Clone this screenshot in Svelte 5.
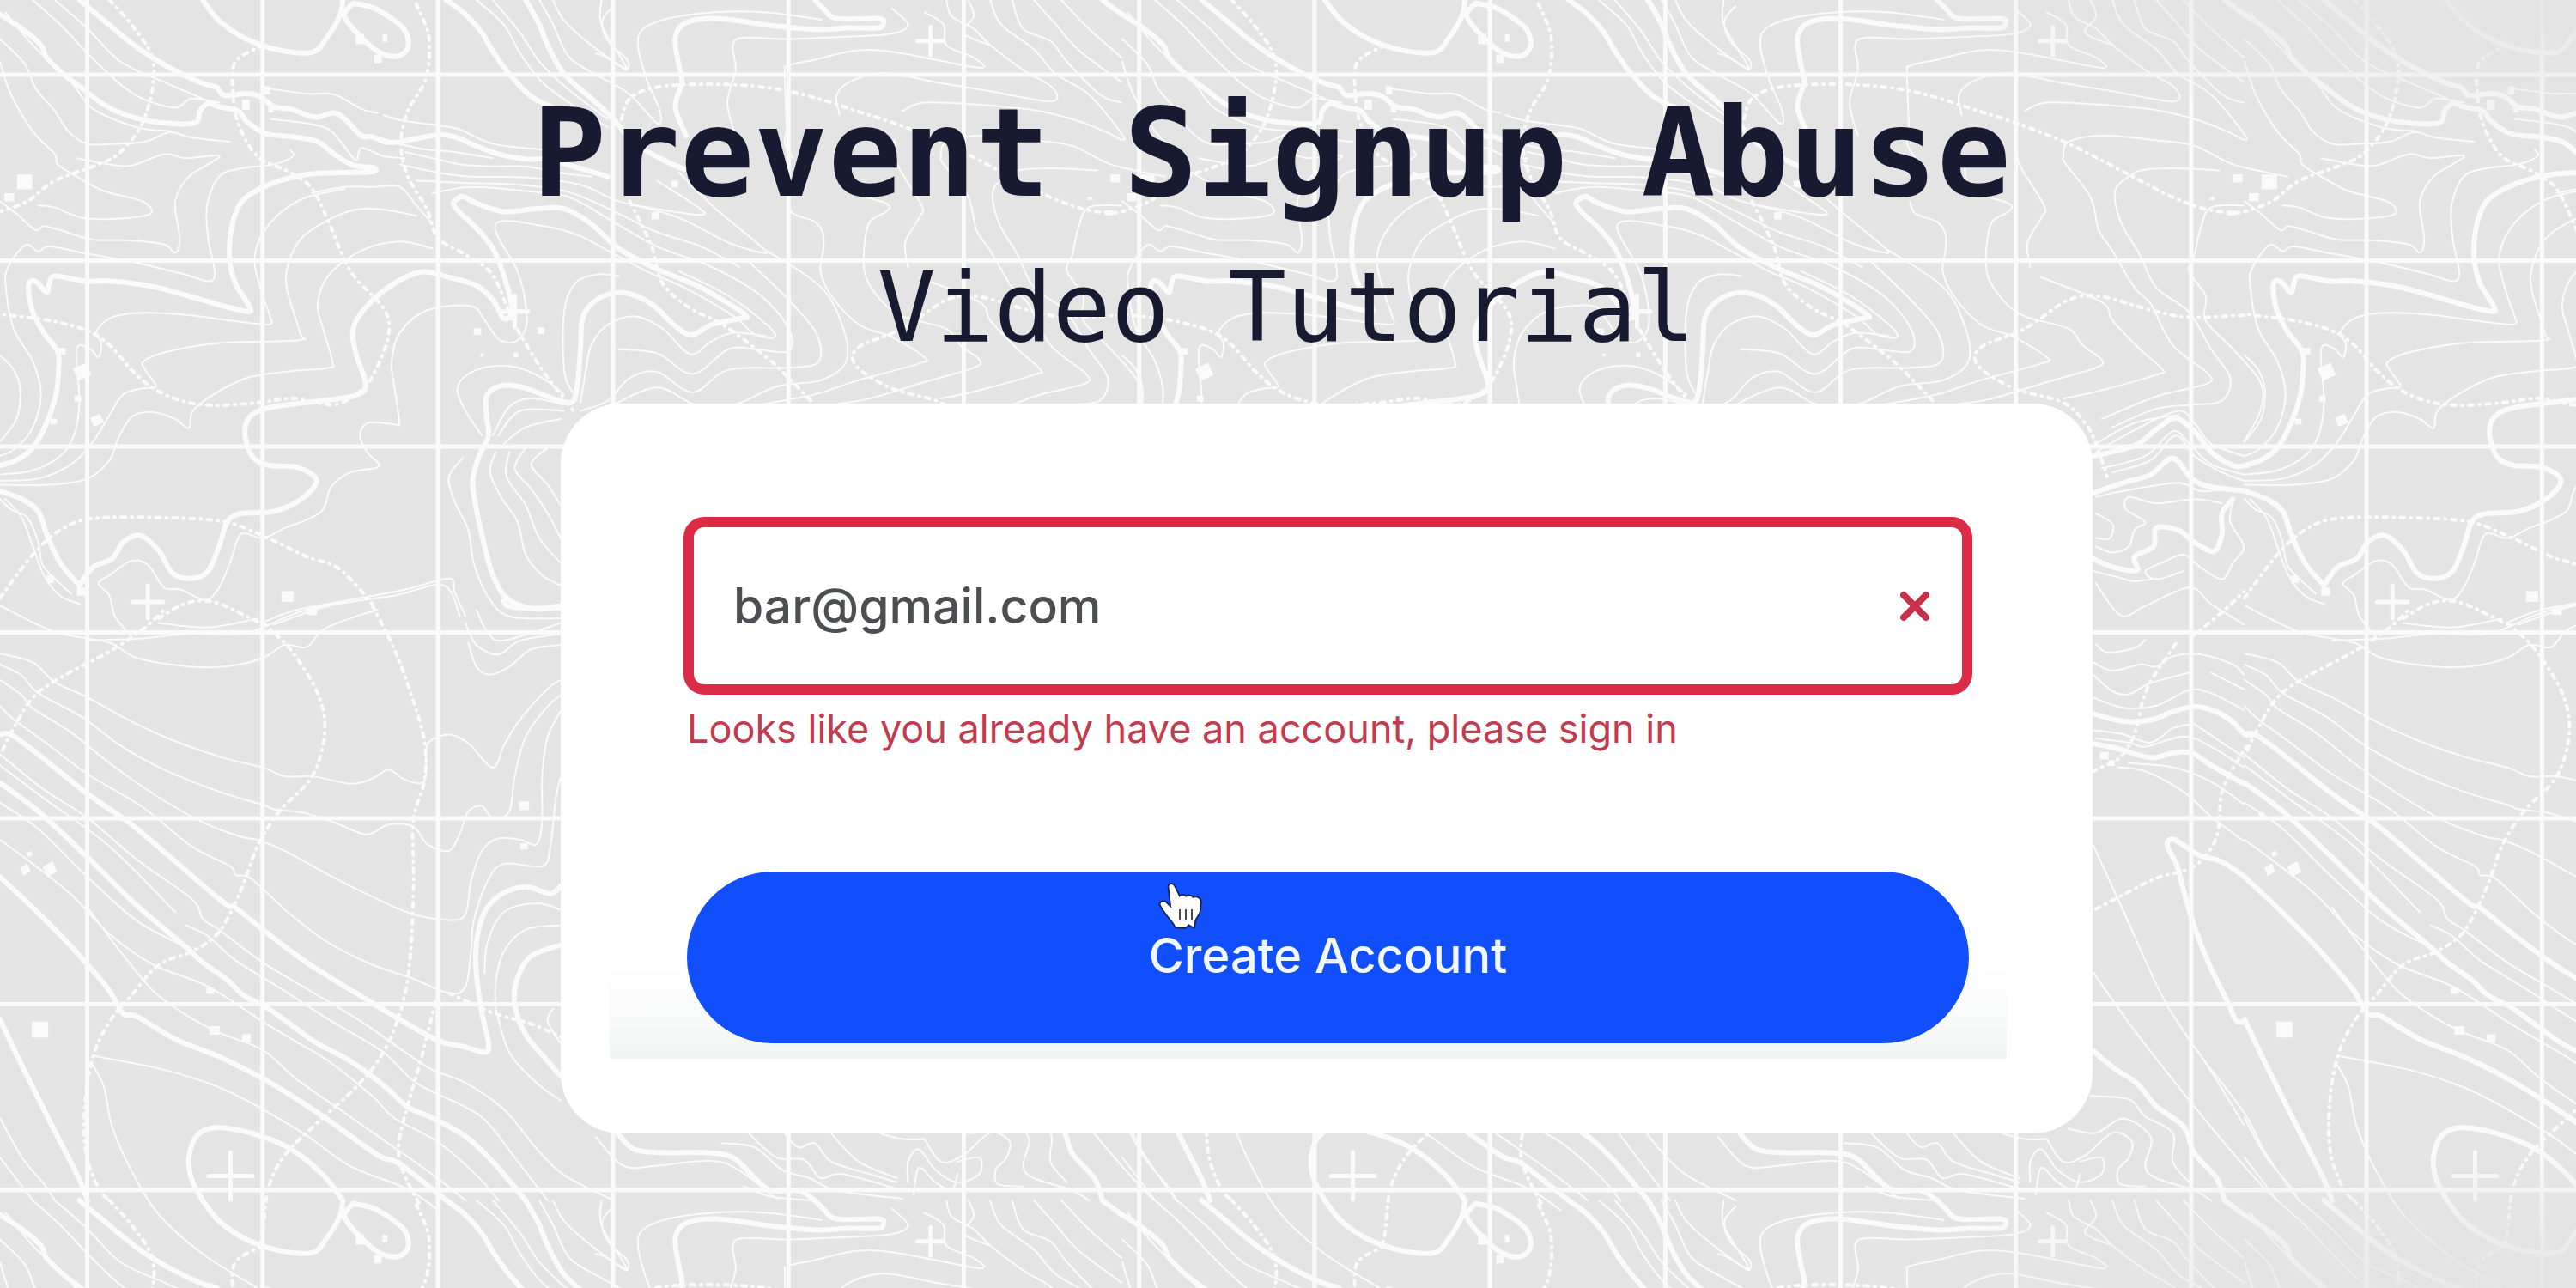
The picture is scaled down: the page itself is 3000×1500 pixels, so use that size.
<script>
  let email = $state('bar@gmail.com');

  // The contour map is a repeating tile, drawn in four sheets with their own scale.
  const TILE_W = 1307;
  const TILE_H = 1398;
  const copies = [0, 1, 2].flatMap((c) => [0, 1].map((r) => ({ x: c * TILE_W, y: r * TILE_H })));

  const sheets = [
    {
      ox: 0, oy: 0, sx: 1.568, sy: 2.09,
      bold: [
        '0,35 40,70 75,110 85,140 120,185 150,215 190,255 230,280 290,298 355,299 365,270 380,252 400,260 435,270 450,295 485,325 530,332 580,345 610,375 645,402 682,408 680,418 620,420 560,425 500,445 450,480 430,520 420,580 420,640 430,690 455,745 452,758 400,742 330,715 270,695 200,684 155,684 100,672 90,690 85,712 70,690 58,683 52,700 60,760 80,810 105,855 107,900 102,960 85,1030 60,1090 30,1120 0,1133',
        '145,0 190,50 250,115 310,165 370,203 395,212 410,232 450,228 475,235 500,260 530,265 560,280 580,285 610,275 630,290 660,330 680,333 710,347 750,340 800,328 835,335 860,350 910,375 960,387 1000,388 1060,410 1110,430',
        '370,0 400,50 450,95 510,122 570,127 595,95 620,40 626,0',
        '645,8 630,30 632,48 655,85 690,125 725,137 745,115 740,75 715,45 680,18 645,8',
        '815,0 850,35 880,80 900,125 930,180 970,235 1010,262',
        '960,0 985,60 1000,110 1030,180 1080,240 1120,290 1160,350 1220,395 1250,412',
        '830,490 845,478 870,495 920,515 980,508 1030,508 1080,545 1130,605 1200,655 1280,700 1360,765 1350,775 1300,790 1262,815 1230,790 1190,740 1140,713 1095,725 1065,770 1060,850 1055,930 1045,978 1010,970 960,945 920,938 890,960 888,1010 892,1060 875,1110 863,1170 870,1240 885,1330 900,1400 925,1455 970,1480 1024,1475',
        '840,480 828,495 840,518 870,555 900,605 920,670 935,755 920,775 900,730 870,695 820,675 770,662 720,690 670,745 645,800 650,860 668,935 650,962 590,975 500,990 460,1010 447,1050 460,1110 490,1132 545,1138 578,1170 550,1215 500,1245 440,1250 415,1270 400,1330 380,1390 350,1408 315,1395 290,1340 255,1303 225,1320 205,1360 170,1380 145,1425',
        '0,1195 40,1215 70,1245 85,1300 110,1370 145,1425'
      ],
      fine: [
        '0,95 45,155 65,215 100,270 125,320 160,350 210,350 265,345 310,322 350,335 420,345',
        '10,30 60,110 130,200 170,265 250,310 310,318',
        '60,0 110,60 160,130 215,200 260,240 320,262 350,240 400,250',
        '100,0 160,70 220,150 300,200 370,240',
        '0,150 20,230 60,320 100,375 105,400 140,430 190,465 260,490 275,520 220,532 150,530 100,505 70,500',
        '140,385 200,400 240,403 300,375 340,385 400,378 380,400 345,430 320,490 328,580 320,615 300,595 240,585 170,583 110,560 80,550 65,560 30,520 0,490',
        '530,365 535,380 500,400 440,410 400,430 378,500 380,580 390,680 330,665 250,640 150,615 90,600 70,612 50,595 35,610 15,650 10,690 25,800 60,880 75,960 60,1040 30,1090 0,1110',
        '570,470 630,455 680,455 730,455 760,500 790,545',
        '0,1155 60,1145 110,1110 135,1060 145,980 140,850 165,850 180,870 185,835 175,810 200,775 250,762 330,765 420,780 490,790 493,770 480,720 465,640 475,580 510,520 560,480 630,460',
        '0,1170 70,1165 130,1130 170,1075 200,1010 225,960 260,945 285,940 265,900 262,880 300,858 400,835 545,828 548,810 525,710 525,650 550,580 600,535 650,510 700,510 760,525',
        '0,1180 90,1180 160,1165 200,1120 215,1070 240,1015 280,1003 320,1020 345,1042 352,1000 390,960 450,920 520,905 600,895 607,880 590,800 580,740 600,670 660,610 730,588 790,605',
        '0,865 25,900 37,950 30,1020 0,1075',
        '730,1035 727,1000 720,940 715,880 730,810 780,755 860,745 885,780 910,825 940,832 960,800 960,740 945,660 905,545 1000,552 1060,575 1110,610 1180,660 1250,700 1340,770 1380,815 1415,820 1400,790 1330,720 1240,660',
        '730,1035 700,1030 670,1030 657,1060 670,1100 692,1135 640,1150 605,1185 590,1240 560,1265 520,1285 480,1310 440,1300 420,1370 400,1430 375,1460 330,1435 300,1430 270,1375 240,1365 200,1400 180,1420 200,1450 210,1500 240,1550',
        '740,370 790,385 840,400 900,405 960,405 1020,420 1080,430',
        '730,400 800,420 860,430 960,432 1060,450 1130,490 1230,515 1285,522 1270,500 1200,440',
        '760,440 850,445 950,450 1040,468 1130,520 1200,565 1280,600 1350,650',
        '790,470 860,455 960,465 1040,480 1120,540 1200,600 1300,650 1390,720 1440,800 1440,855 1380,850 1330,850 1265,910 1200,860 1130,850',
        '1240,420 1300,500 1390,600 1392,615 1330,590 1240,530 1160,500',
        '680,330 760,360 830,370 900,385',
        '495,290 560,300 600,315 625,350 650,390 660,360 700,380 740,385',
        '490,215 560,228 610,230 660,265 690,275',
        '700,280 740,295 800,305 840,315 900,350 1000,365',
        '870,0 920,60 950,130 990,200 1050,260 1110,310',
        '900,0 950,80 985,150 1040,220 1110,290',
        '985,0 1010,60 1040,140 1100,190 1150,230 1200,300 1205,270 1180,190 1165,110 1175,70 1220,45 1300,30 1400,30 1500,48',
        '1010,0 1030,50 1080,110 1140,165 1145,145 1110,100 1100,50 1120,15',
        '1045,955 1030,900 1030,760 1050,690 1090,668 1130,672',
        '880,1060 850,1000 835,950 850,915 890,893 940,893 990,920 1030,960',
        '900,1060 930,990 970,970 1030,985',
        '910,1060 950,1000 1030,1000',
        '920,1080 960,1040 1024,1020',
        '905,1100 895,1150 915,1210 945,1270 960,1350 990,1400 1024,1425',
        '930,1100 925,1160 960,1230 985,1310 1024,1370',
        '960,1090 940,1140 970,1190 1000,1250 1024,1310',
        '1000,1090 970,1130 1000,1180 1024,1230',
        '845,1115 820,1160 830,1220 855,1290 865,1370 890,1450 930,1500 1024,1505',
        '1060,980 1070,900 1080,840 1110,790 1160,770 1210,800 1260,862 1300,830 1340,810 1400,818',
        '1060,1000 1110,975 1150,920 1200,905 1265,955 1330,900 1440,895 1495,880 1490,810 1440,730 1370,640',
        '1120,985 1200,943 1270,985 1340,985 1420,940 1500,925 1545,880 1540,800 1500,700 1400,610',
        '480,1515 540,1485 640,1460 740,1435 820,1408 830,1440 850,1500',
        '500,1520 600,1475 720,1450 810,1425 840,1500',
        '10,1215 40,1260 60,1330 80,1400 110,1450 145,1470',
        '0,1215 20,1240 50,1260 70,1320 80,1380 130,1445'
      ],
      dash: [
        '200,0 240,60 275,130 280,200 260,300 220,370 180,400 100,440 50,490 0,515',
        '480,110 430,150 425,220 435,300 470,380 530,420 570,460 600,540 640,660 700,750 710,810 690,890 660,950 610,985 540,970 470,980 390,987 330,975 280,945 240,900 200,840 160,805 90,780 0,765',
        '760,10 783,90 778,190 745,270 732,350 745,430 780,510 800,580 850,620 900,670 940,790 990,900 1030,970 1050,1005',
        '1135,290 1150,240 1200,212 1300,205 1400,213 1480,235 1568,272',
        '1150,490 1190,600 1210,690 1260,750 1320,790 1400,870 1440,920 1480,975',
        '0,1455 60,1350 110,1290 170,1262 300,1260 410,1270 490,1310 560,1355 620,1385 680,1470',
        '290,1505 340,1468 390,1465 450,1500 480,1520'
      ],
      marks: '45,443,28,36 17,480,18,20 657,95,15,26 703,93,9,18 690,143,14,20 449,255,14,24 487,220,12,20 495,265,10,18 113,855,14,16 142,970,12,14 98,1026,12,14 92,1410,14,18 525,1452,22,26 570,1487,18,20 872,807,14,16 988,805,12,16 880,864,6,8 942,864,8,12 1197,525,14,18 1232,448,12,16 148,1440,16,20',
      gems: '150,905,34,44 177,1023,26,32',
      plus: '270,1465,28,40 940,758,24,38'
    },
    {
      ox: 0, oy: 700, sx: 1.568, sy: 1.96,
      bold: [
        '0,305 20,305 70,350 160,440 240,510 330,605 410,690 430,700 480,750 560,825 670,910 730,955 800,1003 850,1018 885,1030 892,1010 880,940 870,850 870,780 885,710 915,670 960,652 1005,668 1024,650',
        '0,415 70,480 160,585 250,695 340,790 370,825 415,865 445,900 490,930 540,975 580,1010 640,1050 700,1105 745,1155 790,1180 850,1222 900,1280 960,1368',
        '0,630 60,700 120,775 160,830 200,890 225,942 250,948 320,1000 400,1040 480,1090 540,1135 600,1185 690,1265 730,1285 815,1368',
        '0,955 40,1060 90,1185 145,1320 160,1368',
        '370,1368 350,1320 345,1270 360,1220 395,1202 460,1215 530,1250 590,1310 626,1368',
        '1024,785 970,810 945,860 940,920 960,990 1000,1050 1024,1085',
        '920,0 930,12 980,18 1024,15'
      ],
      fine: [
        '0,120 60,140 100,185 160,220 240,275 320,320 400,355 480,380 520,400 570,400 640,417 680,405 710,385 740,408 775,412 778,350 785,320 820,305 855,325 895,378 910,365 920,330 950,270 1000,200 1024,180',
        '0,145 40,170 70,210 150,265 220,330 300,385 400,435 480,465 500,475 560,485 620,510 670,533 710,510 755,515 780,555 820,570 840,530 855,480 880,468 900,495 930,480 940,400 960,310 1000,240 1024,215',
        '0,180 40,215 60,245 130,300 200,370 280,440 370,505 440,538 470,545 520,570 600,625 680,675 750,713 820,728 850,715 860,640 880,570 910,542 950,545 980,555 990,500 990,400 1000,310 1024,250',
        '0,240 25,270 80,320 160,395 260,470 350,560 420,605 430,625 460,635 530,715 600,780 680,830 750,860 820,895 850,880 860,800 865,730 890,640 920,600 990,605 1005,560 1015,450 1024,400',
        '0,350 80,430 160,495 250,590 350,680 370,725 400,750 480,825 560,885 660,960 740,1030 790,1070 850,1100 920,1160 980,1250 1030,1310 1120,1368',
        '0,375 80,450 200,560 320,710',
        '0,460 70,520 160,630 250,730 340,790',
        '340,740 380,765 430,820 520,890 600,955 700,1030 760,1100 850,1155 890,1190 940,1270 1000,1368',
        '0,545 60,600 130,670 200,760 280,830 380,880 480,960 540,1005 600,1050 680,1130 720,1180 800,1235 870,1310 910,1368',
        '160,700 220,800 280,890 340,945 400,985 480,1025 540,1090 620,1160 700,1230 780,1300 850,1368',
        '170,1038 300,1070 400,1110 480,1160 560,1220 640,1290 740,1340 800,1390',
        '170,1060 190,1110 205,1200 240,1300 290,1400 370,1490 470,1568',
        '0,1180 40,1270 80,1330 100,1368',
        '0,1270 60,1368',
        '905,930 905,870 920,800 960,750 1024,740',
        '885,850 890,780 920,710 980,690 1024,705',
        '905,930 930,1030 980,1100 1024,1140',
        '1010,930 1000,960 1024,1010',
        '0,10 100,70 200,95 250,130 350,150 420,148 480,130 520,100 560,105 590,65 650,35 690,20',
        '290,50 380,60 470,40',
        '160,90 260,85 340,75 440,75 480,60 560,20 700,-10',
        '855,95 870,150 895,168 930,150 970,110 1024,100',
        '850,50 870,100 910,122 950,90 1024,75',
        '870,20 890,70 920,90 1024,50'
      ],
      dash: [
        '5,340 25,290 60,220 110,175 200,115 260,65 300,20',
        '480,50 530,110 580,210 593,300 570,400 510,480 470,560 440,660 400,755 350,800 290,830 240,900 200,960 170,1040 155,1150 157,1260 180,1340 200,1368',
        '680,10 720,110 750,210 775,320 775,410 755,500 755,640 750,800 735,920 700,1030 650,1110 580,1190 520,1265 490,1340 480,1440 475,1470',
        '795,915 770,1040 745,1150 728,1240 735,1300 765,1375',
        '820,895 900,940 970,965 1024,995'
      ],
      marks: '73,978,30,36 384,890,14,14 392,980,18,20 450,998,16,18 957,467,18,20 957,560,14,14',
      gems: '91,612,26,36 46,613,20,28 54,577,12,14',
      plus: '421,1312,40,54'
    },
    {
      ox: 694, oy: 0, sx: 1.568, sy: 2.09,
      bold: [
        '400,0 415,20 440,45 515,45 525,56 515,68 460,68 400,72 320,62 220,45 165,55 145,90 150,150 157,200 145,260 165,330',
        '925,0 960,35',
        '685,1110 760,1085 800,1045 835,1018 870,1050 900,1100 940,1133 965,1133',
        '685,1200 740,1175 790,1155 830,1115 865,1165 900,1185 965,1195',
        '685,1360 720,1380 765,1388 760,1355 795,1330 800,1285 840,1290 870,1320 905,1342 920,1300 920,1250 940,1215'
      ],
      fine: [
        '10,0 10,60 50,150 55,170 20,140 0,130',
        '360,385 345,350 348,310 345,180 350,160 400,145 480,122 560,130 700,165 690,140 640,110 635,60 600,30',
        '255,330 240,250 255,170 250,110 270,92 350,95 450,90 540,82 570,60 540,20',
        '445,280 440,230 470,195 530,178 620,200 720,222 830,247 835,215 780,170 720,110 690,70 650,40 640,0',
        '560,270 600,250 700,255 800,268 870,290 930,320 960,340 960,325 900,230 840,180 800,120 740,60 720,0',
        '350,490 360,520 400,540 415,570 415,610 410,660 430,720 480,790 540,820 600,870 590,885 480,925 400,960 300,985',
        '450,385 460,460 530,495 530,515 500,540 490,600 492,670 520,730 560,770 640,800 665,840 700,875 690,895 600,930 500,970 440,983',
        '545,340 550,400 595,500 590,530 565,590 570,650',
        '590,675 700,735 720,780 770,850 812,900 800,912 700,950 630,970',
        '1040,430 940,400 870,355 790,340 700,330 640,345 630,380 635,400 680,480 695,560 720,610 760,700 790,740 830,840 895,910 890,935 800,965 700,1020',
        '915,415 850,410 780,413 750,430 725,465 735,540 770,620 800,700 860,760 900,850 935,920 920,975 870,985 800,995 720,1040',
        '960,500 900,505 880,560 870,620 860,660 890,720 890,780 940,850 990,930 990,1000 960,1075',
        '760,0 780,70 830,100 860,150 920,230 960,250',
        '800,0 840,60 880,120 960,200',
        '850,0 900,70 960,140',
        '680,0 690,40 670,80 720,110',
        '690,1100 770,1040 840,1000 870,1030 900,1080 960,1110',
        '690,1080 760,1030 840,1010',
        '700,1140 780,1110 830,1050 860,1080 900,1130 960,1155',
        '720,1150 790,1120 835,1060 870,1110 920,1150 960,1170',
        '690,1210 740,1195 840,1175 880,1195 930,1190',
        '920,1225 870,1215 800,1225 750,1210 745,1240 780,1270 760,1290 750,1330 720,1345 690,1330',
        '690,1250 720,1275 715,1310 690,1310',
        '940,1220 935,1270 960,1330 940,1370 920,1410 880,1380 850,1350 810,1370 780,1390 800,1410 850,1390',
        '685,1390 730,1405 760,1415 800,1408',
        '690,1420 735,1498 780,1475 860,1430 900,1470 960,1520'
      ],
      dash: [
        '480,272 545,300 640,350 750,425 830,480 900,512 960,518',
        '960,767 860,772 790,755 700,722 640,730 560,800 480,845 475,890 540,945 630,980 670,1030 690,1080 710,1160',
        '865,1550 920,1490 960,1440'
      ],
      marks: '948,434,18,20 937,518,16,12 902,483,8,8',
      gems: '',
      plus: '611,100,24,34'
    },
    {
      ox: 694, oy: 750, sx: 1.568, sy: 2.09,
      bold: [
        '685,170 740,188 790,185 830,165 870,152 910,165 940,190 960,218 975,222',
        '685,243 730,255 790,277 830,265 865,265 900,295 960,340',
        '960,565 920,530 880,515 850,490 830,475 820,490 838,540 850,600 870,690 900,790 930,870 945,915 960,920',
        '685,990 720,1030 765,1070 800,1125 850,1175 870,1240 910,1300 925,1355',
        '40,1192 70,1230 120,1238 200,1238 250,1250 290,1300 320,1330 370,1330 400,1355'
      ],
      fine: [
        '685,45 720,65 770,50 800,55 830,30 880,25 940,50 960,75',
        '685,75 720,115 750,122 790,95 865,68',
        '685,130 740,155 800,150 860,112 900,120 960,160',
        '685,210 740,220 790,240 830,205 865,195',
        '690,230 750,240 780,250 850,225 900,250 960,300',
        '750,290 830,300 900,335 960,390',
        '730,300 780,310 850,360 900,420 960,480',
        '690,0 710,20 760,10 780,-10',
        '900,70 960,110',
        '870,195 920,240 960,275',
        '685,490 740,650 780,770 820,880 880,1000 960,1140 1000,1240 1060,1355',
        '685,800 760,940 860,1110 960,1270 1020,1355',
        '870,980 900,1040 960,1170',
        '680,1100 750,1108 780,1150 830,1190 830,1260 860,1310',
        '640,1180 690,1190 740,1155 790,1200 780,1270 800,1300 870,1330 900,1355',
        '600,1205 630,1260 670,1245 720,1190 755,1210 750,1250 730,1280 735,1315 780,1320',
        '570,1310 570,1260 590,1230 620,1280 660,1310 700,1290 700,1250 660,1260',
        '580,1340 590,1275 620,1310 650,1330 660,1290',
        '345,1192 370,1225 400,1215 430,1260 500,1290 550,1310',
        '280,1192 330,1250 380,1255 410,1300 450,1290 560,1330',
        '230,1215 290,1225 340,1280 390,1300 440,1330 560,1350',
        '270,1320 320,1345 400,1355',
        '430,1192 480,1260 550,1300',
        '0,1200 50,1270 110,1270 210,1258 260,1280 330,1350',
        '520,1192 560,1205 600,1205'
      ],
      dash: [
        '835,0 820,30 790,90 775,140 760,220 735,275 700,300 685,310',
        '690,645 740,610 800,570 870,540 910,470 920,360 950,280 965,250'
      ],
      marks: '705,272,16,18 718,290,12,14',
      gems: '993,415,14,12',
      plus: ''
    }
  ];

  const round = (n) => Math.round(n * 10) / 10;

  // Smooth curve through every point of a list.
  function curve(text, s) {
    const p = text.split(' ').map((pair) => {
      const [x, y] = pair.split(',').map(Number);
      return [s.ox + x / s.sx, s.oy + y / s.sy];
    });
    let d = `M${round(p[0][0])} ${round(p[0][1])}`;
    for (let i = 0; i < p.length - 1; i++) {
      const a = p[i - 1] ?? p[i];
      const b = p[i];
      const c = p[i + 1];
      const e = p[i + 2] ?? c;
      d += `C${round(b[0] + (c[0] - a[0]) / 6)} ${round(b[1] + (c[1] - a[1]) / 6)} ${round(c[0] - (e[0] - b[0]) / 6)} ${round(c[1] - (e[1] - b[1]) / 6)} ${round(c[0])} ${round(c[1])}`;
    }
    return d;
  }

  function boxes(text, s) {
    if (!text) return [];
    return text.split(' ').map((item) => {
      const [x, y, w, h] = item.split(',').map(Number);
      return { x: s.ox + x / s.sx, y: s.oy + y / s.sy, w: w / s.sx, h: h / s.sy };
    });
  }

  const lines = (kind) => sheets.map((s) => s[kind].map((t) => curve(t, s)).join('')).join('');
  const shapes = (kind) => sheets.flatMap((s) => boxes(s[kind], s));

  const bold = lines('bold');
  const fine = lines('fine');
  const dash = lines('dash');
  const marks = shapes('marks')
    .map((b) => `M${round(b.x - b.w / 2)} ${round(b.y - b.h / 2)}h${round(b.w)}v${round(b.h)}h${round(-b.w)}z`)
    .join('');
  const gems = shapes('gems')
    .map((b) => `M${round(b.x + b.w / 5)} ${round(b.y - b.h / 2)}L${round(b.x + b.w / 2)} ${round(b.y + b.h / 6)}L${round(b.x - b.w / 5)} ${round(b.y + b.h / 2)}L${round(b.x - b.w / 2)} ${round(b.y - b.h / 6)}z`)
    .join('');
  const plus = shapes('plus')
    .map((b) => `M${round(b.x - b.w)} ${round(b.y)}h${round(b.w * 2)}M${round(b.x)} ${round(b.y - b.h)}v${round(b.h * 2)}`)
    .join('');

  const grid =
    Array.from({ length: 15 }, (_, i) => `M${round(101.5 + i * 204.2)} 0V1500`).join('') +
    Array.from({ length: 7 }, (_, i) => `M0 ${round(87 + i * 216.5)}H3000`).join('');
</script>

<div class="page">
  <svg class="map" viewBox="0 0 3000 1500" preserveAspectRatio="xMidYMid slice" aria-hidden="true">
    <defs>
      <radialGradient id="fade">
        <stop offset="0" stop-color="#e4e4e4" stop-opacity="0.95" />
        <stop offset="0.35" stop-color="#e4e4e4" stop-opacity="0.65" />
        <stop offset="1" stop-color="#e4e4e4" stop-opacity="0" />
      </radialGradient>
      <g id="tile">
        <path class="fine" d={fine} />
        <path class="bold" d={bold} />
        <path class="dash" d={dash} />
        <path class="solid" d={marks} />
        <path class="solid" d={gems} />
        <path class="plus" d={plus} />
      </g>
    </defs>
    {#each copies as c}
      <use href="#tile" x={c.x} y={c.y} />
    {/each}
    <path class="grid" d={grid} />
    <ellipse cx="3000" cy="0" rx="800" ry="170" fill="url(#fade)" />
    <ellipse cx="3000" cy="1500" rx="800" ry="170" fill="url(#fade)" />
  </svg>

  <header>
    <h1>Prevent Signup Abuse</h1>
    <p>Video Tutorial</p>
  </header>

  <main class="card">
    <form class="panel" onsubmit={(e) => e.preventDefault()}>
      <div class="field">
        <input type="email" aria-label="Email" aria-invalid="true" aria-describedby="email-error" bind:value={email} />
        <svg class="cross" viewBox="0 0 34 36" aria-hidden="true">
          <path d="M4 5 30 31M30 5 4 31" />
        </svg>
      </div>
      <p class="error" id="email-error">Looks like you already have an account, please sign in</p>
      <button type="submit">
        Create Account
        <svg class="hand" viewBox="137 137 174 183" aria-hidden="true">
          <path
            d="M180 158C180 146 194 146 198 156L217 194C221 186 236 185 239 194C245 187 260 188 263 197C272 191 289 196 290 209L288 237C285 256 274 263 270 276L267 298L249 288L237 299L205 298C196 280 176 261 164 242L151 221C148 210 162 206 170 214L189 232Z"
          />
          <path class="ridge" d="M218 236V274M239 236V274M260 236V274" />
        </svg>
      </button>
    </form>
  </main>
</div>

<style>
  :global(body) {
    margin: 0;
  }

  .page {
    position: relative;
    box-sizing: border-box;
    min-height: 100vh;
    padding: 99px 0 180px;
    overflow: hidden;
    background: #e4e4e4;
    font-family: Inter, "Open Sans", sans-serif;
  }

  .map {
    position: absolute;
    inset: 0;
    width: 100%;
    height: 100%;
  }

  .map path {
    fill: none;
    stroke: #fafafa;
    stroke-linecap: round;
    stroke-linejoin: round;
  }

  .map .fine {
    stroke-width: 2;
  }

  .map .bold {
    stroke-width: 6;
  }

  .map .dash {
    stroke-width: 4;
    stroke-dasharray: 5 7 1 7;
  }

  .map .solid {
    fill: #fafafa;
    stroke: none;
  }

  .map .plus {
    stroke-width: 5;
  }

  .map .grid {
    stroke-width: 5;
    stroke-linecap: butt;
  }

  header {
    position: relative;
    padding-right: 4px;
    color: #181a31;
    font-family: "DejaVu Sans Mono", monospace;
    text-align: center;
  }

  h1 {
    margin: 0;
    padding-right: 34px;
    font-size: 143px;
    line-height: 160px;
    font-weight: 700;
  }

  header p {
    margin: 33px 0 0;
    font-size: 113px;
    line-height: 132px;
  }

  .card {
    position: relative;
    margin: 46px 563px 0 653px;
    padding: 0 100px 87px 57px;
    border-radius: 70px;
    background: #fff;
  }

  .panel {
    display: flex;
    flex-direction: column;
    padding: 132px 40px 18px 86px;
    background: linear-gradient(to top, #f3f4f4, #fff 112px);
  }

  .field {
    display: flex;
    align-items: center;
    box-sizing: border-box;
    height: 207px;
    padding: 0 38px 0 46px;
    border: 12px solid #dc2b47;
    border-radius: 24px;
    background: #fff;
  }

  input {
    flex: 1;
    min-width: 0;
    padding: 0;
    border: 0;
    outline: 0;
    background: none;
    color: #4d4e52;
    font: 500 57px/80px Inter, "Open Sans", sans-serif;
  }

  .cross {
    width: 34px;
    height: 36px;
  }

  .cross path {
    fill: none;
    stroke: #c9304a;
    stroke-width: 8;
    stroke-linecap: round;
  }

  .error {
    margin: 12px 4px 138px;
    color: #c23b4e;
    font-size: 45px;
    line-height: 56px;
  }

  button {
    position: relative;
    height: 200px;
    margin: 0 4px;
    padding: 0 0 4px;
    border: 0;
    border-radius: 100px;
    background: #104ffb;
    color: #f2f6ff;
    font: 500 56px/80px Inter, "Open Sans", sans-serif;
    cursor: pointer;
  }

  .hand {
    position: absolute;
    top: 11px;
    left: calc(50% - 200px);
    width: 58px;
    height: 61px;
  }

  .hand path {
    fill: #fff;
    stroke: #14224d;
    stroke-width: 10;
    stroke-linejoin: round;
    paint-order: stroke;
  }

  .hand .ridge {
    fill: none;
    stroke: #4a4a4a;
    stroke-width: 6;
  }
</style>
